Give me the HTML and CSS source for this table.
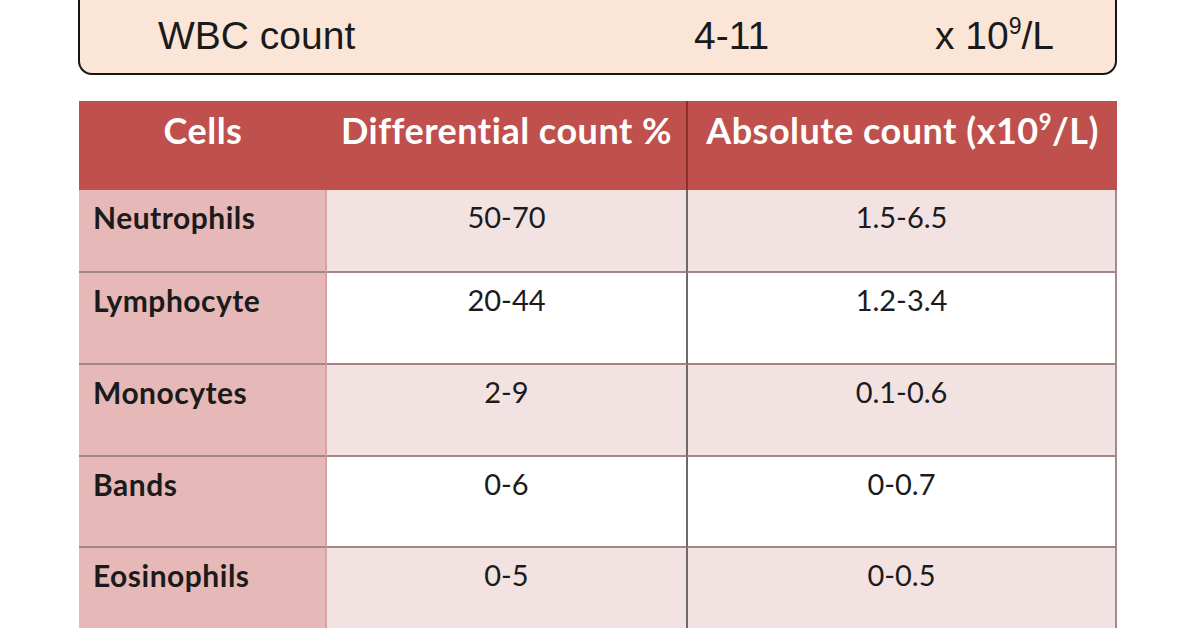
FILE: index.html
```html
<!DOCTYPE html>
<html lang="en">
<head>
<meta charset="utf-8">
<title>WBC count</title>
<link rel="stylesheet" href="styles.css">
</head>
<body>
<div class="page">
  <div class="wbc-box">
    <span class="wbc-label">WBC count</span>
    <span class="wbc-range">4-11</span>
    <span class="wbc-unit">x 10<sup>9</sup>/L</span>
  </div>
  <div class="table">
    <div class="th c1">Cells</div>
    <div class="th c2">Differential count %</div>
    <div class="th c3">Absolute count (x10<sup>9</sup>/L)</div>

    <div class="td c1 first">Neutrophils</div>
    <div class="td c2 first alt">50-70</div>
    <div class="td c3 first alt">1.5-6.5</div>

    <div class="td c1">Lymphocyte</div>
    <div class="td c2">20-44</div>
    <div class="td c3">1.2-3.4</div>

    <div class="td c1">Monocytes</div>
    <div class="td c2 alt">2-9</div>
    <div class="td c3 alt">0.1-0.6</div>

    <div class="td c1">Bands</div>
    <div class="td c2">0-6</div>
    <div class="td c3">0-0.7</div>

    <div class="td c1 last">Eosinophils</div>
    <div class="td c2 alt last">0-5</div>
    <div class="td c3 alt last">0-0.5</div>
  </div>
</div>
</body>
</html>
```

FILE: styles.css
```css
html {
  overflow: hidden;
  background: #ffffff;
}

body {
  margin: 0;
  padding: 0;
}

.page {
  width: 1196px;
  padding: 1px 0 0 78px;
  box-sizing: border-box;
}

.wbc-box {
  width: 1039px;
  height: 100px;
  margin-top: -26px;
  box-sizing: border-box;
  border: 2.5px solid #151515;
  border-radius: 14px;
  background: #fbe5d7;
  display: flex;
  align-items: flex-end;
  padding: 0 0 15px 78px;
  font-family: "Liberation Sans", Arial, sans-serif;
  font-size: 39px;
  line-height: 44px;
  color: #1a1a1a;
}

.wbc-label { width: 536px; }
.wbc-range { width: 241px; }

.wbc-box sup {
  font-size: 23px;
  vertical-align: 15px;
  line-height: 0;
}

.table {
  margin-top: 26px;
  margin-left: 1px;
  width: 1038px;
  display: grid;
  grid-template-columns: 248px 361px 429px;
  grid-template-rows: 89px 83px 92px 92px 91px 92px;
  font-family: Lato, "Open Sans", sans-serif;
  line-height: 34px;
}

.th {
  background: #c0504d;
  color: #ffffff;
  font-weight: 700;
  font-size: 36px;
  text-align: center;
  padding-top: 12px;
  letter-spacing: 0.5px;
}

.th sup {
  font-size: 22px;
  vertical-align: 14px;
  line-height: 0;
}

.th.c2 { border-right: 2px solid #8e2f2c; }

.td {
  color: #1b1b1b;
  font-size: 29px;
  padding-top: 10px;
  box-sizing: border-box;
  border-bottom: 2px solid #a48586;
  text-align: center;
  background: #ffffff;
}

.td.c1 {
  background: #e6b8b7;
  font-weight: 700;
  font-size: 30px;
  text-align: left;
  padding-left: 14px;
  letter-spacing: 0.5px;
  border-right: 2px solid #d6a3a3;
}

.td.c2 { border-right: 2px solid #6f6a6a; }
.td.c3 { border-right: 2px solid #a38b8d; }
.td.alt { background: #f3e2e2; }
.td.last { border-bottom: none; }
```
